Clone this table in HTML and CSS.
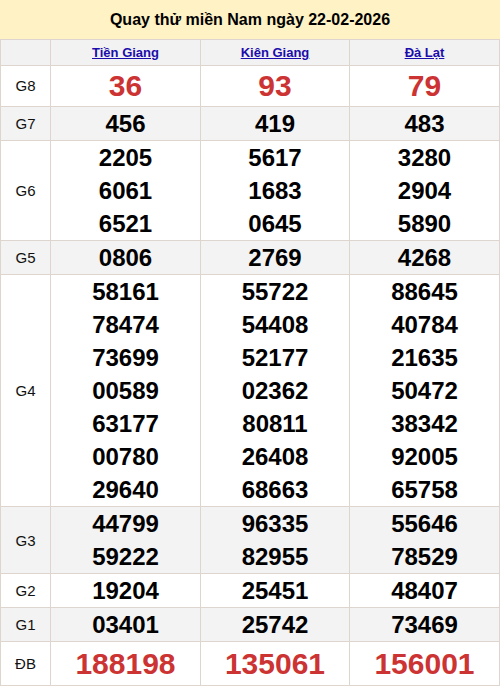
FILE: index.html
```html
<!DOCTYPE html>
<html lang="vi">
<head>
<meta charset="utf-8">
<link rel="stylesheet" href="styles.css">
</head>
<body>
<div class="title">Quay thử miền Nam ngày 22-02-2026</div>
<table class="kq">
<colgroup><col class="c0"><col class="c1"><col class="c2"><col class="c3"></colgroup>
<tr class="head"><th></th><th><a href="#">Tiền Giang</a></th><th><a href="#">Kiên Giang</a></th><th><a href="#">Đà Lạt</a></th></tr>
<tr class="g8"><td class="lbl">G8</td><td class="red">36</td><td class="red">93</td><td class="red">79</td></tr>
<tr class="alt"><td class="lbl">G7</td><td>456</td><td>419</td><td>483</td></tr>
<tr><td class="lbl">G6</td><td><div>2205</div><div>6061</div><div>6521</div></td><td><div>5617</div><div>1683</div><div>0645</div></td><td><div>3280</div><div>2904</div><div>5890</div></td></tr>
<tr class="alt"><td class="lbl">G5</td><td>0806</td><td>2769</td><td>4268</td></tr>
<tr><td class="lbl">G4</td>
<td><div>58161</div><div>78474</div><div>73699</div><div>00589</div><div>63177</div><div>00780</div><div>29640</div></td>
<td><div>55722</div><div>54408</div><div>52177</div><div>02362</div><div>80811</div><div>26408</div><div>68663</div></td>
<td><div>88645</div><div>40784</div><div>21635</div><div>50472</div><div>38342</div><div>92005</div><div>65758</div></td></tr>
<tr class="alt"><td class="lbl">G3</td><td><div>44799</div><div>59222</div></td><td><div>96335</div><div>82955</div></td><td><div>55646</div><div>78529</div></td></tr>
<tr><td class="lbl">G2</td><td>19204</td><td>25451</td><td>48407</td></tr>
<tr class="alt"><td class="lbl">G1</td><td>03401</td><td>25742</td><td>73469</td></tr>
<tr class="db"><td class="lbl">ĐB</td><td class="red">188198</td><td class="red">135061</td><td class="red">156001</td></tr>
</table>
</body>
</html>
```
FILE: styles.css
```css
html, body { margin: 0; padding: 0; background: #fff; }
body { font-family: "Liberation Sans", Arial, sans-serif; width: 500px; }
.title {
  height: 39px;
  line-height: 39px;
  background: #fff2c5;
  text-align: center;
  font-weight: bold;
  font-size: 16px;
  color: #000;
}
.kq {
  width: 500px;
  border-collapse: collapse;
  table-layout: fixed;
}
.c0 { width: 50px; }
.c1 { width: 150px; }
.c2 { width: 149px; }
.c3 { width: 150px; }
.kq th, .kq td {
  border: 1px solid #ddd5ce;
  padding: 0;
  text-align: center;
  vertical-align: middle;
}
.kq td {
  font-size: 24px;
  font-weight: bold;
  line-height: 33px;
  color: #000;
}
.kq .head th {
  background: #f2f2f2;
  height: 25px;
  line-height: 25px;
  font-size: 13px;
}
.kq .head a { color: #1a0dab; text-decoration: underline; }
.kq td.lbl {
  font-size: 15px;
  font-weight: normal;
  color: #111;
}
.kq .alt td { background: #f3f3f3; }
.kq .g8 td { line-height: 40px; }
.kq .g8 td.red { font-size: 30px; }
.kq .db td { line-height: 43px; }
.kq .db td.red { font-size: 30px; }
.kq td.red { color: #cc3333; }
```
